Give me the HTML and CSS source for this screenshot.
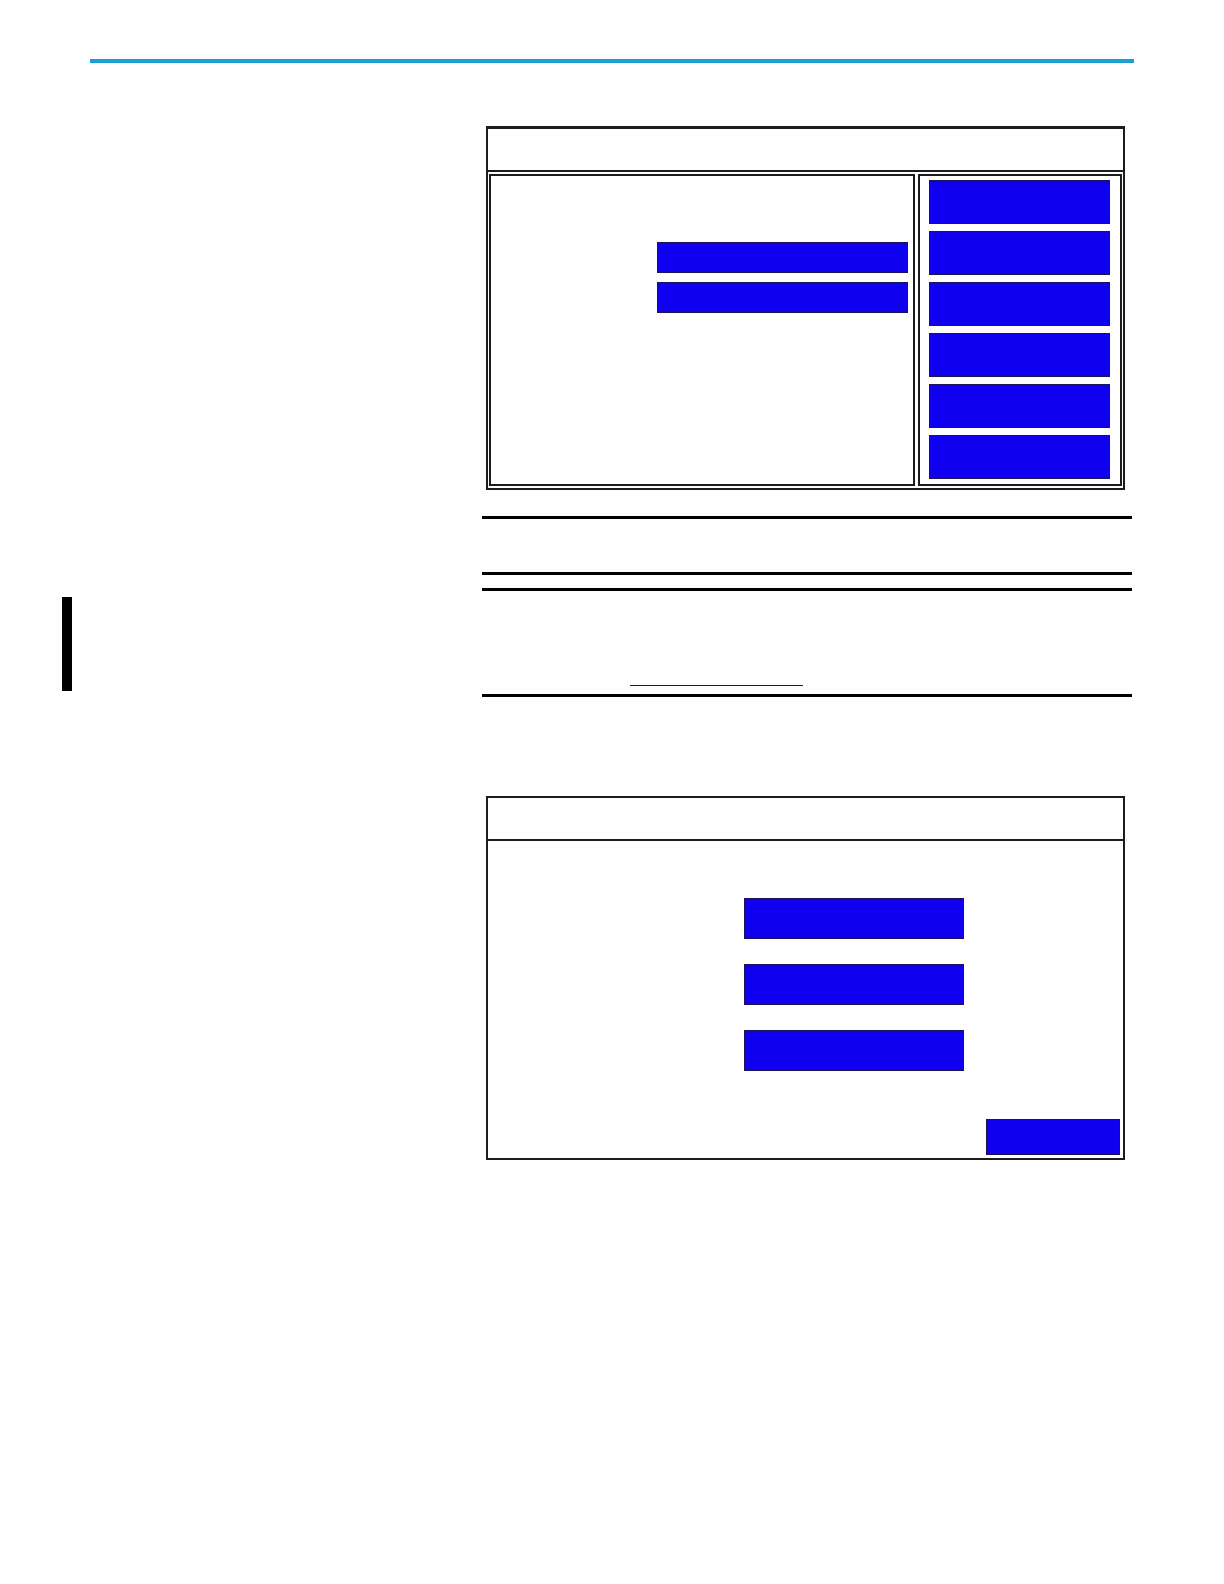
FILE: index.html
```
<!DOCTYPE html>
<html lang="en">

<head>
  <meta charset="UTF-8">
  <meta name="viewport" content="width=device-width, initial-scale=1.0">
  <title>Manual</title>
  <link rel="stylesheet" href="styles.css">
</head>

<body>
  <header class="top_line"></header>
  <main class="content">
    <section class="screen screen_split">
      <div class="screen_head"></div>
      <div class="panels">
        <div class="panel fields">
          <button type="button" class="btn" aria-label="Field 1"></button>
          <button type="button" class="btn" aria-label="Field 2"></button>
        </div>
        <div class="panel menu">
          <button type="button" class="btn" aria-label="Menu 1"></button>
          <button type="button" class="btn" aria-label="Menu 2"></button>
          <button type="button" class="btn" aria-label="Menu 3"></button>
          <button type="button" class="btn" aria-label="Menu 4"></button>
          <button type="button" class="btn" aria-label="Menu 5"></button>
          <button type="button" class="btn" aria-label="Menu 6"></button>
        </div>
      </div>
    </section>

    <div class="note note_short"></div>

    <div class="change_bar"></div>
    <div class="note note_long">
      <a class="link" href="#" aria-label="Link"></a>
    </div>

    <section class="screen screen_single">
      <div class="screen_head"></div>
      <div class="options">
        <button type="button" class="btn" aria-label="Option 1"></button>
        <button type="button" class="btn" aria-label="Option 2"></button>
        <button type="button" class="btn" aria-label="Option 3"></button>
      </div>
      <div class="actions">
        <button type="button" class="btn" aria-label="Action"></button>
      </div>
    </section>
  </main>
</body>

</html>
```
FILE: styles.css
```
* {
  box-sizing: border-box;
}

body {
  margin: 0;
  min-height: 100vh;
  padding-top: 59px;
  background: #fefefe;
  font-family: "Liberation Sans", Arial, sans-serif;
}

.top_line {
  height: 4px;
  margin: 0 90px;
  background: #1a9fd9;
}

/* change bar column + content column */
.content {
  display: grid;
  grid-template-columns: 10px 1fr;
  column-gap: 410px;
  padding: 63px 92px 0 62px;
}

.screen,
.note {
  grid-column: 2;
}

/* screens */
.screen {
  display: flex;
  flex-direction: column;
  min-height: 364px;
  margin: 0 7px 0 4px;
  border: 2px solid #1c1c1e;
}

.screen_split {
  border-top-width: 3px;
}

.screen_head {
  height: 43px;
  border-bottom: 2px solid #1c1c1e;
}

.btn {
  display: block;
  padding: 0;
  border: 1px solid #1b1358;
  border-radius: 0;
  background: #1000f0;
}

.panels {
  flex: 1;
  display: flex;
  gap: 3px;
  padding: 2px 1px;
}

.panel {
  display: flex;
  flex-direction: column;
  border: 2px solid #1c1c1e;
}

.fields {
  flex: 1;
  align-items: flex-end;
  gap: 9px;
  padding: 66px 5px 0;
}

.fields .btn {
  width: 251px;
  height: 31px;
}

.menu {
  width: 204px;
  gap: 7px;
  padding: 4px 10px 5px 9px;
}

.menu .btn {
  height: 44px;
}

/* notes */
.note {
  border-top: 3px solid #000;
  border-bottom: 3px solid #000;
}

.note_short {
  height: 59px;
  margin: 26px 0 13px;
}

.note_long {
  display: flex;
  align-items: flex-end;
  height: 109px;
  padding: 0 148px 8px;
}

.link {
  width: 173px;
  height: 20px;
  border-bottom: 1px solid #10108c;
}

.change_bar {
  grid-column: 1;
  margin: 9px 0 6px;
  background: #000;
}

/* second screen */
.screen_single {
  margin-top: 99px;
}

.options {
  flex: 1;
  display: flex;
  flex-direction: column;
  align-items: center;
  gap: 25px;
  padding: 57px 0 0 97px;
}

.options .btn {
  width: 220px;
  height: 41px;
}

.actions {
  display: flex;
  justify-content: flex-end;
  padding: 3px;
}

.actions .btn {
  width: 134px;
  height: 36px;
}
```
